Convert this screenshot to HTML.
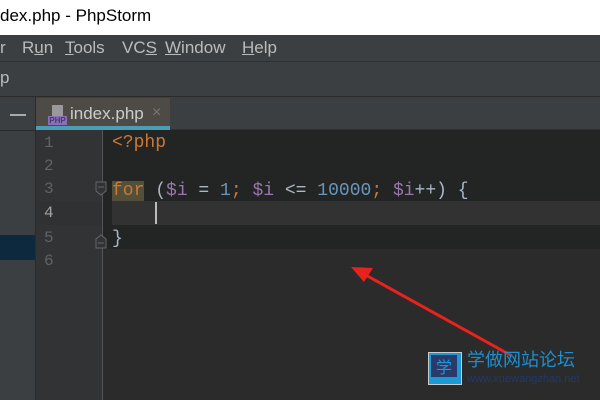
<!DOCTYPE html>
<html><head><style>
*{margin:0;padding:0;box-sizing:border-box}
body{width:600px;height:400px;overflow:hidden;background:#2b2b2b;position:relative;font-family:"Liberation Sans",sans-serif}
.a{position:absolute}
.code{font-family:"Liberation Mono",monospace;font-size:18px;white-space:pre;line-height:24px}
.ln{font-family:"Liberation Mono",monospace;font-size:16px;color:#606366;position:absolute;left:44px}
u{text-decoration:underline}
</style></head><body>
<div class="a" style="left:0;top:0;width:600px;height:35px;background:#fff;font-size:17px;color:#000;padding:6px 0 0 0">dex.php - PhpStorm</div>
<div class="a" style="left:0;top:35px;width:600px;height:27px;background:#3c3f41;border-bottom:1px solid #2f3133;color:#bbb;font-size:17px;padding-top:3px">
<span class="a" style="left:0">r</span><span class="a" style="left:22px">R<u>u</u>n</span><span class="a" style="left:65px"><u>T</u>ools</span><span class="a" style="left:122px">VC<u>S</u></span><span class="a" style="left:165px"><u>W</u>indow</span><span class="a" style="left:242px"><u>H</u>elp</span></div>
<div class="a" style="left:0;top:62px;width:600px;height:35px;background:#3c3f41;border-bottom:1px solid #2b2b2b;color:#bbb;font-size:17px;padding-top:6px">p</div>
<div class="a" style="left:0;top:97px;width:36px;height:303px;background:#3c3f41;border-right:1px solid #2b2b2b"></div>
<div class="a" style="left:10px;top:114px;width:16px;height:2px;background:#aaa"></div>
<div class="a" style="left:0;top:130px;width:35px;height:1px;background:#2b2b2b"></div>
<div class="a" style="left:0;top:235px;width:35px;height:25px;background:#0d293e"></div>
<div class="a" style="left:36px;top:97px;width:564px;height:33px;background:#3c3f41;border-bottom:1px solid #323232"></div>
<div class="a" style="left:36px;top:98px;width:134px;height:28px;background:#4e4b46"></div>
<div class="a" style="left:36px;top:126px;width:134px;height:4px;background:#4a9fb5"></div>
<div class="a" style="left:52px;top:105px;width:11px;height:11px;background:#999"></div>
<div class="a" style="left:48px;top:116px;width:19px;height:9px;background:#8a6fb8;color:#4b3a6f;font-size:8px;font-weight:bold;line-height:9px;text-align:center">PHP</div>
<div class="a" style="left:70px;top:104px;color:#ccc;font-size:17px">index.php</div>
<div class="a" style="left:152px;top:104px;color:#777;font-size:16px">×</div>
<div class="a" style="left:36px;top:130px;width:66px;height:270px;background:#313335"></div>
<div class="a" style="left:102px;top:130px;width:1px;height:270px;background:#555"></div>
<div class="a" style="left:103px;top:130px;width:497px;height:119px;background:#232525"></div>
<div class="a" style="left:36px;top:201px;width:66px;height:24px;background:#2f3133"></div>
<div class="a" style="left:112px;top:201px;width:488px;height:24px;background:#323232"></div>
<div class="ln" style="top:134px">1</div><div class="ln" style="top:157px">2</div><div class="ln" style="top:180px">3</div><div class="ln" style="top:204px;color:#a4a3a3">4</div><div class="ln" style="top:229px">5</div><div class="ln" style="top:252px">6</div>
<svg class="a" style="left:94px;top:180px" width="16" height="70"><path d="M2 2h10v9l-5 4l-5-4z M4 7h6 M2 68h10v-9l-5-4l-5 4z M4 63h6" fill="#313335" stroke="#666" stroke-width="1"/></svg>
<div class="a code" style="left:112px;top:131px;color:#a9b7c6"><span style="color:#cc7832">&lt;?php</span>

<span style="color:#cc7832;background:#52503a">for</span> (<span style="color:#9876aa">$i</span> = <span style="color:#6897bb">1</span><span style="color:#cc7832">;</span> <span style="color:#9876aa">$i</span> &lt;= <span style="color:#6897bb">10000</span><span style="color:#cc7832">;</span> <span style="color:#9876aa">$i</span>++) {

}</div>
<div class="a" style="left:155px;top:202px;width:2px;height:22px;background:#bbb"></div>
<svg class="a" style="left:0;top:0" width="600" height="400"><line x1="512" y1="356" x2="362" y2="273" stroke="#e8221c" stroke-width="3"/><path d="M351 267l22 1l-9 14z" fill="#e8221c"/></svg>
<div class="a" style="left:428px;top:352px;width:34px;height:33px;background:#1b9ad6;border:1px solid #ccc"></div>
<div class="a" style="left:431px;top:355px;width:26px;height:22px;background:#2a3a6a;color:#1b9ad6;font-size:16px;text-align:center;font-family:'Noto Sans CJK SC',sans-serif;line-height:22px">学</div>
<div class="a" style="left:467px;top:348px;color:#1b8fd0;font-size:18px;font-family:'Liberation Sans','Noto Sans CJK SC',sans-serif;line-height:24px">学做网站论坛</div>
<div class="a" style="left:467px;top:373px;color:#1e3a6e;font-size:11px">www.xuewangzhan.net</div>
</body></html>
